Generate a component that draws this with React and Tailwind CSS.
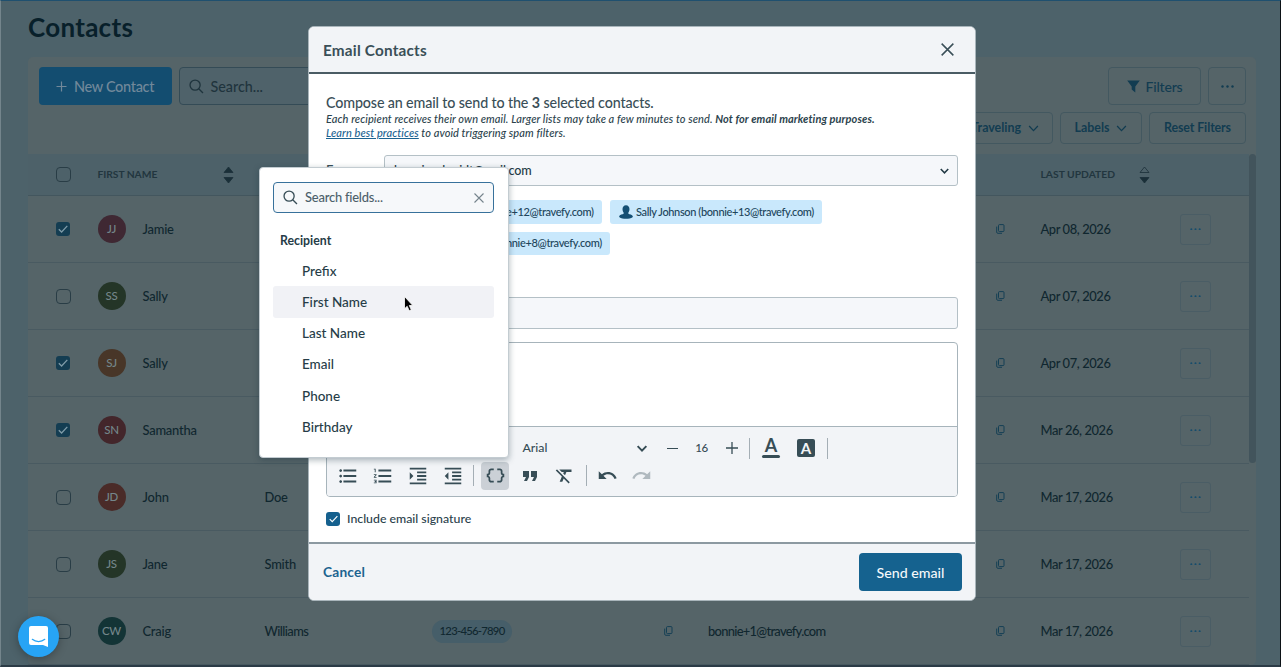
import React from "react";
import {
  MdFormatListBulleted,
  MdFormatListNumbered,
  MdFormatIndentIncrease,
  MdFormatIndentDecrease,
  MdDataObject,
  MdFormatQuote,
  MdFormatClear,
  MdUndo,
  MdRedo,
} from "react-icons/md";

const ROWS = [
  { initials: "JJ", first: "Jamie", last: "", color: "bg-[#3f2833]", date: "Apr 08, 2026", checked: true },
  { initials: "SS", first: "Sally", last: "", color: "bg-[#243527]", date: "Apr 07, 2026" },
  { initials: "SJ", first: "Sally", last: "", color: "bg-[#483628]", date: "Apr 07, 2026", checked: true },
  { initials: "SN", first: "Samantha", last: "", color: "bg-[#43262b]", date: "Mar 26, 2026", checked: true },
  { initials: "JD", first: "John", last: "Doe", color: "bg-[#4a2b28]", date: "Mar 17, 2026" },
  { initials: "JS", first: "Jane", last: "Smith", color: "bg-[#243527]", date: "Mar 17, 2026" },
  { initials: "CW", first: "Craig", last: "Williams", color: "bg-[#133436]", date: "Mar 17, 2026", phone: "123-456-7890", email: "bonnie+1@travefy.com" },
];

const FIELDS = ["Prefix", "First Name", "Last Name", "Email", "Phone", "Birthday"];

function SearchIcon({ className }) {
  return (
    <svg className={className} viewBox="0 0 16 16" fill="none" stroke="currentColor" strokeWidth="1.4">
      <circle cx="6.5" cy="6.5" r="5.4" />
      <path d="M10.4 10.4 14.9 14.9" />
    </svg>
  );
}

function Chevron({ className, weight = 1.5 }) {
  return (
    <svg className={className} viewBox="0 0 12 8" fill="none" stroke="currentColor" strokeWidth={weight}>
      <path d="M1 1.2 6 6.4 11 1.2" />
    </svg>
  );
}

function Cross({ className, weight = 1.4 }) {
  return (
    <svg className={className} viewBox="0 0 12 12" fill="none" stroke="currentColor" strokeWidth={weight}>
      <path d="M.6.6 11.4 11.4M11.4.6.6 11.4" />
    </svg>
  );
}

function Check({ className }) {
  return (
    <svg className={className} viewBox="0 0 10 8" fill="none" stroke="currentColor" strokeWidth="1.3">
      <path d="M.8 4.2 3.6 7 9.3.9" />
    </svg>
  );
}

function Dots({ className }) {
  return (
    <svg className={className} viewBox="0 0 13 3" fill="currentColor">
      <circle cx="1.5" cy="1.5" r="1.2" />
      <circle cx="6.5" cy="1.5" r="1.2" />
      <circle cx="11.5" cy="1.5" r="1.2" />
    </svg>
  );
}

function CopyIcon() {
  return (
    <svg className="h-[10px] w-[9px] text-[#143f54]" viewBox="0 0 9 10" fill="none" stroke="currentColor" strokeWidth="1">
      <rect x="2.5" y=".6" width="5.5" height="7" rx="1" />
      <path d="M.7 2.6V8.2c0 .7.4 1.1 1.1 1.1H6" />
    </svg>
  );
}

function Sort({ hollow }) {
  return (
    <svg className="h-[18px] w-[11px] text-[#1a2f38]" viewBox="0 0 11 18" fill="currentColor" stroke="currentColor" strokeWidth=".8">
      <path d="M5.5 1 10 6.5H1Z" fill={hollow ? "none" : "currentColor"} />
      <path d="M5.5 17 10 11.5H1Z" />
    </svg>
  );
}

function TableCheckbox({ checked }) {
  return checked ? (
    <div className="flex h-[14px] w-[14px] items-center justify-center rounded-[3px] bg-[#143d52] text-[#7f9ba8]">
      <Check className="h-[8px] w-[10px]" />
    </div>
  ) : (
    <div className="h-[15px] w-[15px] rounded-[4px] border border-[#293d46]" />
  );
}

function Person() {
  return (
    <svg className="mr-[3px] h-[14px] w-[14px] shrink-0 text-[#144f74]" viewBox="0 0 14 14" fill="currentColor">
      <path d="M7 .3c2.2 0 3.600 1.700 3.500 4-.1 1.900-.8 3-1.300 3.600.1.900.8 1.100 1.800 1.400 1.800.5 2.800 1.300 2.900 2.600C11.800 13.400 9.500 13.800 7 13.800S2.200 13.400.1 11.900C.2 10.600 1.200 9.800 3 9.300c1-.3 1.700-.5 1.800-1.400-.5-.6-1.200-1.700-1.300-3.600C3.400 2 4.800.3 7 .3Z" />
    </svg>
  );
}

function Recipient({ children, tracking }) {
  return (
    <div className="flex h-[23.500px] items-center whitespace-nowrap rounded-[3px] bg-[#c9e8fc] pl-[9px] pr-[8.500px] text-[11px] text-[#20455b]">
      <Person />
      <span className={tracking}>{children}</span>
    </div>
  );
}

function Separator() {
  return <div className="h-[21px] w-px bg-[#a4aeb5]" />;
}

function ContactsPage() {
  return (
    <div className="flex h-full w-full flex-col border-b-2 border-l border-r border-t border-b-[#2b3b46] border-l-[#74858c] border-r-[#0c1216] border-t-[#1f506f] bg-[#4d626a] pl-[27px] pr-[24px]">
      <h1 className="h-[56px] shrink-0 pt-[8px] text-[26px] font-bold leading-[37px] tracking-[0.280px] text-[#08202a]">Contacts</h1>
      <div className="flex h-[608px] w-[1228px] shrink-0 flex-col rounded-[5px] bg-[#556468]">
        <div className="flex h-[97px] shrink-0 justify-between pl-[10.500px] pr-[10px] pt-[10px]">
          <div className="flex gap-[7px]">
            <div className="flex h-[38px] w-[133px] items-center justify-center gap-[7px] rounded-[4px] bg-[#134d70] text-[#71889a]">
              <svg className="h-[11px] w-[11px]" viewBox="0 0 11 11" stroke="currentColor" strokeWidth="1.2">
                <path d="M5.500.5v10M.5 5.500h10" />
              </svg>
              <span className="pt-px text-[14.500px] tracking-[-0.320px]">New Contact</span>
            </div>
            <div className="flex h-[38px] w-[260px] items-center gap-[7px] rounded-[4px] border border-[#344b56] bg-[#4f626a] pl-[9px] text-[#1f343d]">
              <SearchIcon className="h-[15px] w-[15px]" />
              <span className="pt-px text-[14.300px]">Search...</span>
            </div>
          </div>
          <div className="flex flex-col items-end gap-[7px] text-[#123c51]">
            <div className="flex gap-[7px]">
              <div className="flex h-[38px] w-[93px] items-center justify-center gap-[6px] rounded-[4px] border border-[#435860]">
                <svg className="h-[13px] w-[13px]" viewBox="0 0 13 13" fill="currentColor">
                  <path d="M.2.500h12.600L8.300 6.600v6L4.700 9.500V6.600Z" />
                </svg>
                <span className="text-[14px] leading-[19px] tracking-[-0.200px]">Filters</span>
              </div>
              <div className="flex h-[38px] w-[38px] items-center justify-center rounded-[4px] border border-[#435860]">
                <Dots className="h-[3px] w-[13px]" />
              </div>
            </div>
            <div className="flex gap-[7px] text-[12.400px] font-bold">
              <div className="flex h-[32px] w-[104px] items-center justify-end gap-[7px] rounded-[4px] border border-[#435860] pr-[13px]">
                <span className="pt-px">Traveling</span> <Chevron className="h-[7px] w-[11px]" />
              </div>
              <div className="flex h-[32px] w-[82px] items-center justify-center gap-[7px] rounded-[4px] border border-[#435860]">
                <span className="pt-px">Labels</span> <Chevron className="h-[7px] w-[11px]" />
              </div>
              <div className="flex h-[32px] w-[97px] items-center justify-center rounded-[4px] border border-[#435860] pt-px tracking-[-0.100px]">Reset Filters</div>
            </div>
          </div>
        </div>
        <div className="flex min-h-0 flex-1">
          <div className="w-[1221px]">
            <div className="flex h-[42px] items-center border-b border-[#43565e] bg-[#4d6169] pl-[27.500px] text-[10.300px] font-bold text-[#22363f]">
              <div className="w-[42px]"><TableCheckbox /></div>
              <div className="w-[125px] tracking-[-0.050px]">FIRST NAME</div>
              <div className="w-[818px]"><Sort /></div>
              <div className="w-[98px]">LAST UPDATED</div>
              <Sort hollow />
            </div>
            {ROWS.map((r, i) => (
              <div key={i} className="flex h-[67px] items-center border-b border-[#495a61] pl-[27.500px] text-[12.900px] tracking-[-0.220px] text-[#10272f]">
                <div className="w-[42px]"><TableCheckbox checked={r.checked} /></div>
                <div className="w-[45px]">
                  <div className={"flex h-[28px] w-[28px] items-center justify-center rounded-full text-[11.500px] text-[#74868a] " + r.color}>{r.initials}</div>
                </div>
                <div className="w-[122px] pt-px">{r.first}</div>
                <div className={"w-[167.500px] pt-px " + (r.last === "Williams" ? "tracking-[-0.600px]" : "")}>{r.last}</div>
                <div className="w-[232px]">
                  {r.phone && (
                    <span className="flex h-[23px] w-[80px] items-center justify-center rounded-full bg-[#465e69] text-[11.300px] tracking-[-0.750px]">{r.phone}</span>
                  )}
                </div>
                <div className="w-[44px]"><CopyIcon /></div>
                <div className="w-[288px] pt-px tracking-[-0.700px]">{r.email}</div>
                <div className="w-[44.500px]"><CopyIcon /></div>
                <div className="w-[139.500px] pt-px tracking-[-0.400px]">{r.date}</div>
                <div className="flex h-[31px] w-[31px] items-center justify-center rounded-[3px] border border-[#4a5d65] text-[#164c6c]">
                  <Dots className="h-[2.500px] w-[11px]" />
                </div>
              </div>
            ))}
          </div>
          <div className="h-[309px] w-[7px] rounded-full bg-[#42545c]" />
        </div>
      </div>
    </div>
  );
}

function EmailModal() {
  return (
    <div className="absolute left-[308px] top-[26px] flex h-[575px] w-[668px] flex-col overflow-hidden rounded-[6px] border border-[#a9b5bb] bg-white text-[#3a4f58]">
      <div className="flex h-[47px] shrink-0 items-center justify-between border-b-2 border-[#4a5c64] bg-[#f2f4f7] pl-[14px] pr-[21px]">
        <h2 className="pt-[2px] text-[15.300px] font-bold tracking-[0.200px]">Email Contacts</h2>
        <Cross className="h-[13px] w-[13px]" />
      </div>
      <div className="flex flex-1 flex-col px-[17px] pt-[19px]">
        <p className="h-[19px] whitespace-nowrap text-[14.300px] leading-[19px] tracking-[-0.140px]">
          Compose an email to send to the <b>3</b> selected contacts.
        </p>
        <div className="whitespace-nowrap text-[11px] italic leading-[14px] tracking-[0.085px] text-[#2c434d]">
          <p>
            Each recipient receives their own email. Larger lists may take a few minutes to send. <b>Not for email marketing purposes.</b>
          </p>
          <p>
            <span className="text-[#1c6391] underline">Learn best practices</span> to avoid triggering spam filters.
          </p>
        </div>
        <div className="mt-[15px] flex h-[31px] items-center">
          <span className="w-[58px] pt-px text-[13px]">From:</span>
          <div className="flex h-[31px] flex-1 items-center justify-between rounded-[3px] border border-[#b4c0c6] bg-[#f5f7fa] pl-[9px] pr-[8px] text-[12.600px] text-[#243b46]">
            <span className="w-[133px] whitespace-nowrap pt-px tracking-[-0.180px]">bonnieschmidt@mail.com</span>
            <Chevron className="h-[6px] w-[9px]" weight={2} />
          </div>
        </div>
        <div className="mt-[14px] flex h-[56px]">
          <span className="w-[58px] text-[13px]">To:</span>
          <div className="flex flex-1 flex-wrap content-start gap-x-[8px] gap-y-[8px]">
            <Recipient tracking="tracking-[-0.370px]">Jamie Johnson (bonnie+12@travefy.com)</Recipient>
            <Recipient tracking="tracking-[-0.380px]">Sally Johnson (bonnie+13@travefy.com)</Recipient>
            <Recipient tracking="tracking-[-0.345px]">Samantha Nelson (bonnie+8@travefy.com)</Recipient>
          </div>
        </div>
        <div className="mt-[41px] flex h-[32px] items-center">
          <span className="w-[58px] text-[13px]">Subject:</span>
          <div className="h-[32px] flex-1 rounded-[3px] border border-[#b4c0c6] bg-[#f5f7fa]" />
        </div>
        <div className="mt-[13px] flex h-[155px] shrink-0 flex-col overflow-hidden rounded-[4px] border border-[#a7b4bb]">
          <div className="h-[84px] shrink-0 border-b border-[#a7b4bb]" />
          <div className="flex flex-1 flex-col bg-[#f2f4f7] pt-[7px] text-[#374d56]">
            <div className="flex h-[28px] items-center pl-[195.500px]">
              <span className="w-[113px] text-[12.300px]">Arial</span>
              <Chevron className="h-[7px] w-[12px]" weight={2.2} />
              <svg className="ml-[19px] h-[11px] w-[11px]" viewBox="0 0 11 11" stroke="currentColor" strokeWidth="1.200"><path d="M0 5.500h11" /></svg>
              <span className="ml-[13.500px] w-[21px] text-center text-[11.500px] tracking-[-0.500px]">16</span>
              <svg className="ml-[14px] mr-[11px] h-[12px] w-[12px]" viewBox="0 0 12 12" stroke="currentColor" strokeWidth="1.300"><path d="M0 6h12M6 0v12" /></svg>
              <Separator />
              <div className="ml-[12px] flex h-[20px] w-[18px] flex-col items-center justify-between">
                <span className="text-[18px] font-bold leading-[15px]">A</span>
                <div className="h-[3px] w-[18px] rounded-full bg-[#374d56]" />
              </div>
              <div className="ml-[17px] mr-[12px] flex h-[18px] w-[18px] items-center justify-center rounded-[2px] bg-[#374d56] text-[15px] font-bold leading-none text-[#f2f4f7]">A</div>
              <Separator />
            </div>
            <div className="flex h-[27px] items-center pl-[10px]">
              <MdFormatListBulleted className="h-[22px] w-[22px]" />
              <MdFormatListNumbered className="ml-[12.500px] h-[22px] w-[22px]" />
              <MdFormatIndentIncrease className="ml-[13px] h-[22px] w-[22px]" />
              <MdFormatIndentDecrease className="ml-[13px] mr-[9.500px] h-[22px] w-[22px]" />
              <Separator />
              <div className="ml-[7px] flex h-[28px] w-[28px] items-center justify-center rounded-[4px] bg-[#cbd0d6]">
                <MdDataObject className="h-[21px] w-[21px]" />
              </div>
              <MdFormatQuote className="ml-[9px] h-[24px] w-[24px]" />
              <MdFormatClear className="ml-[12px] mr-[11px] h-[21px] w-[21px]" />
              <Separator />
              <MdUndo className="ml-[10px] h-[21px] w-[21px]" />
              <MdRedo className="ml-[13px] h-[21px] w-[21px] text-[#b0b9bf]" />
            </div>
          </div>
        </div>
        <div className="mt-[12.500px] flex items-center gap-[7px] text-[12.300px] text-[#2a414b]">
          <div className="flex h-[14px] w-[14px] items-center justify-center rounded-[3px] bg-[#15608e] text-white">
            <Check className="h-[8px] w-[9px]" />
          </div>
          Include email signature
        </div>
      </div>
      <div className="flex h-[58px] shrink-0 items-center justify-between border-t-2 border-[#8c99a1] bg-[#f2f4f7] pl-[14px] pr-[13px]">
        <span className="pt-px text-[13.700px] font-bold tracking-[0.200px] text-[#1c6390]">Cancel</span>
        <div className="flex h-[38px] w-[103px] items-center justify-center rounded-[4px] bg-[#15628f] pt-px text-[14.200px] text-[#f4f8fb]">Send email</div>
      </div>
    </div>
  );
}

function FieldMenu() {
  return (
    <div className="absolute left-[259px] top-[167px] flex h-[291px] w-[250px] flex-col rounded-[4px] border border-[#c3ccd1] bg-white pl-[13px] pr-[14px] pt-[14px] text-[#263c47] shadow-[0_2px_6px_rgba(20,45,60,0.350)]">
      <div className="flex h-[31px] shrink-0 items-center rounded-[4px] border-[1.500px] border-[#37719b] bg-[#f6f8fa] pl-[9px] pr-[9px]">
        <SearchIcon className="h-[15px] w-[15px] text-[#374d56]" />
        <span className="ml-[7px] flex-1 pt-px text-[12.900px] tracking-[-0.200px] text-[#4c606a]">Search fields...</span>
        <Cross className="h-[10px] w-[10px] text-[#75848c]" weight={1.3} />
      </div>
      <div className="mt-[13px] flex h-[29px] shrink-0 items-center pl-[7px] pt-px text-[12.300px] font-bold">Recipient</div>
      {FIELDS.map((f) => (
        <div key={f} className={"flex h-[31.300px] shrink-0 items-center rounded-[3px] pl-[29px] text-[13.500px] " + (f === "First Name" ? "bg-[#f1f2f6]" : "")}>
          {f}
        </div>
      ))}
    </div>
  );
}

export default function App() {
  return (
    <div className="relative h-[667px] w-[1281px] overflow-hidden font-['Lato',sans-serif] font-medium">
      <ContactsPage />
      <div className="absolute left-[18px] top-[616px] flex h-[41px] w-[41px] items-center justify-center rounded-full bg-[#27a4f5] shadow-[0_2px_10px_rgba(0,0,0,0.300)]">
        <svg className="h-[21px] w-[19px]" viewBox="0 0 19 21" fill="none">
          <path d="M2 0h15a2 2 0 0 1 2 2v19l-5-2H2a2 2 0 0 1-2-2V2a2 2 0 0 1 2-2Z" fill="#fff" />
          <path d="M3.300 13.300c3.500 3 9 3 12.500 0" stroke="#27a4f5" strokeWidth="1.200" strokeLinecap="round" />
        </svg>
      </div>
      <EmailModal />
      <FieldMenu />
      <svg className="absolute left-[403px] top-[295px] h-[18px] w-[12px]" viewBox="0 0 12 18">
        <path d="M1.500 1.500v12.300l2.700-2.500 2 4.400 2.100-.9-2-4.300h3.500Z" fill="#000" stroke="#fff" strokeWidth=".8" />
      </svg>
    </div>
  );
}
